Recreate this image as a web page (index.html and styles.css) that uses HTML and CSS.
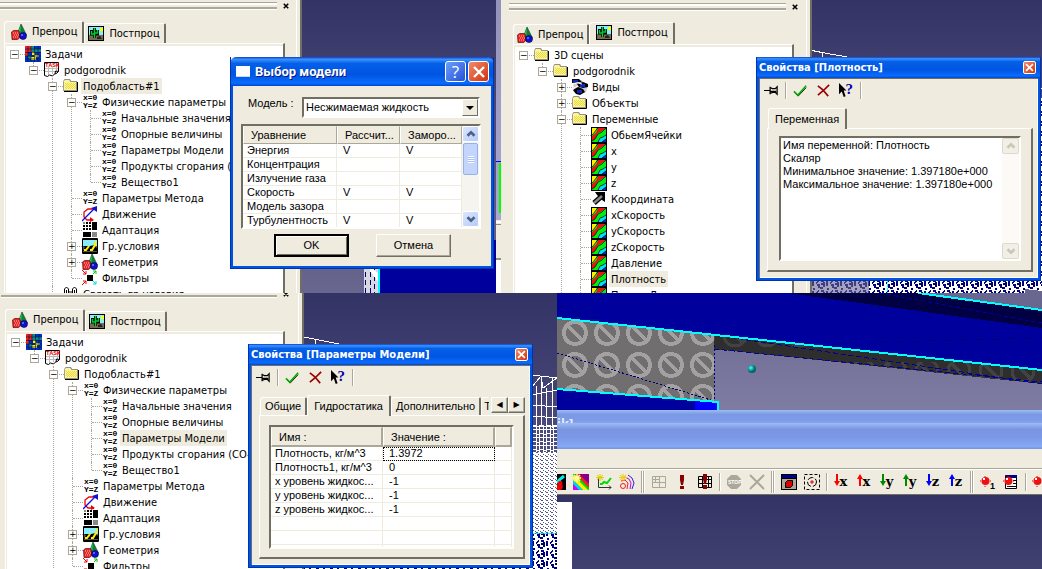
FILE: index.html
```html
<!DOCTYPE html>
<html lang="ru">
<head>
<meta charset="utf-8">
<title>Параметры модели</title>
<link rel="stylesheet" href="styles.css">
</head>
<body>
<svg class="sprite" aria-hidden="true">
  <symbol id="i-shapes" viewBox="0 0 16 16"><path fill="#108030" stroke="#042" stroke-width=".6" d="M10 0L15.500 11H6z"/><path fill="#3c6" d="M10 1l-3 8 2 1z"/><path fill="#e22" stroke="#300" stroke-width=".6" d="M.5 8l2-1.500h5l1 1.500v6l-2 1.500H1z"/><path stroke="#fff" stroke-width=".7" stroke-dasharray="1 1" d="M2 9h5M3 11h5M2 13h5"/><circle cx="12" cy="12" r="3.500" fill="#11c" stroke="#004" stroke-width=".6"/><circle cx="11" cy="11" r="1" fill="#77f"/></symbol>
  <symbol id="i-photo" viewBox="0 0 16 16"><path d="M0 0h16v15H0z"/><path fill="#8ef" d="M1 1h14v8H1z"/><path fill="#776c50" d="M1 9h14v5H1z"/><path fill="#ff0" d="M12 2h3v3h-3z"/><path stroke="#000" stroke-width="3" fill="none" d="M6.500 2v10M3.500 4v4h3M9.500 4v4h-3"/><path stroke="#0c3" stroke-width="1.500" fill="none" d="M6.500 2v10M3.500 5v3h3M9.500 4v3h-3"/><path fill="#222" d="M9 11l3-1 2 3H9z"/></symbol>
  <symbol id="i-grid" viewBox="0 0 16 16"><path fill="#03c" d="M0 0h16v16H0z"/><path fill="#e22" d="M0 0h6v6H0zM0 6h3v4H0z"/><path fill="#188" d="M6 0h3v6H6zM9 3h7v3H9zM3 10h3v3H3z"/><path fill="#fe0" d="M7 6h3v3h4v2h-3v3H6v-3h3V9H7z"/><path stroke="#013" stroke-width=".6" d="M3 0v16M6 0v16M9.500 0v16M13 0v16M0 3h16M0 6.500h16M0 10h16M0 13h16"/></symbol>
  <symbol id="i-task" viewBox="0 0 16 16"><path fill="#fff" stroke="#000" d="M.5.5h14v9l-2 2-2 .5-2 2-3-1-2 1.500-3-1z"/><path stroke="#bbb" d="M1 6.500h13M1 9.500h12M4.500 5v8M8.500 5v7M12.500 5v6"/><text x="1" y="5" font-family="Liberation Mono" font-weight="bold" font-size="6" fill="#e00">TASK</text><path fill="none" stroke="#000" d="M14.500 9.500l-3-.5-.5 3"/></symbol>
  <symbol id="i-folder" viewBox="0 0 16 16"><path fill="#888" d="M1 3l1-2h5l1 2h6v10H1z"/><path fill="#fbf3a0" stroke="#8b8570" stroke-width=".8" d="M.5 3.500l1-2h5l1 2h6v9H.5z"/><path stroke="#e8dc30" stroke-dasharray="1 1" d="M2 5.500h11M3 6.500h10M2 7.500h11M3 8.500h10M2 9.500h11M3 10.500h10"/><path fill="none" stroke="#000" d="M14.500 4v9.500H1"/></symbol>
  <symbol id="i-xy" viewBox="0 0 16 16"><g font-family="Liberation Mono" font-weight="bold" font-size="8"><text x="1" y="6">x=0</text><text x="1" y="14">Y=Z</text></g></symbol>
  <symbol id="i-move" viewBox="0 0 16 16"><path fill="none" stroke="#e00" stroke-width="1.300" d="M12 3H6L2 6v5l3 3h6"/><path fill="#e00" d="M8 11l4 3-4 2z"/><path stroke="#11d" stroke-width="1.300" d="M0 15L13 2"/><path fill="#11d" d="M15 0v6l-6-4z"/></symbol>
  <symbol id="i-adapt" viewBox="0 0 16 16"><path d="M10 0h5v8h-5zM1 10h8v5H1z"/><path fill="#888" d="M10 10h5v5h-5zM1 0h2v2H1z"/><path d="M4 0h2v2H4zM7 0h2v2H7zM1 3h2v2H1zM4 3h2v2H4zM7 3h2v2H7zM1 6h2v2H1zM4 6h2v2H4zM7 6h2v2H7z"/></symbol>
  <symbol id="i-bound" viewBox="0 0 16 16"><rect width="16" height="16" rx="1"/><path fill="#8ef" d="M1 2h14v6H1z"/><path fill="#555" d="M1 8h14v6H1z"/><path d="M1 8l2 1-2 4h7l5-6-5 1-2 3V8zM12 8l3 2v3h-4z"/><path stroke="#fe0" stroke-width="2" fill="none" d="M2 12h2l3-4M8 12h2l3-5 1-4"/></symbol>
  <symbol id="i-filter" viewBox="0 0 16 16"><path d="M5 5h6v6H5z"/><g fill="none"><path stroke="#e00" d="M0 0l4 4V1M4 4H1M0 15l4-4v3M4 11H1"/><path stroke="#0c0" d="M11 4l3-3h-3M14 1v3"/><path stroke="#0dd" d="M11 11l3 3h-3M14 14v-3"/></g></symbol>
  <symbol id="i-link" viewBox="0 0 16 16"><path fill="none" stroke="#000" d="M1.500 9V3l2-2 2 2v6M3.500 9V4M9.500 9V3l2-2 2 2v6M11.500 9V4M5 6h5"/></symbol>
  <symbol id="i-eyes" viewBox="0 0 16 16"><path fill="#ccc" d="M1 1h8l7 5-2 7-6 3-6-3z"/><path d="M0 0h7l3 3H6L0 4zM5 5l6-2 5 2v3l-5 1-4-1zM1 11l5-3 5 2 2 3-5 3-4-1z"/><path fill="#12c" d="M1 1h5v2H1zM8 5h5v3H8zM5 11h5v3H5z"/><path stroke="#fff" d="M1 5l5-1 4 1M2 9l4-2"/></symbol>
  <symbol id="i-field" viewBox="0 0 16 16"><path d="M0 0h16v16H0z"/><path fill="#0e1" d="M1 1h14v14H1z"/><path fill="#fe0" d="M1 1h4v3L1 8z"/><path fill="#e11" d="M7 1h8L11 4 7 6l-3 6-3 2V9l4-3z"/><path fill="#0df" d="M15 8v4l-5 3H7l2-4 3-1z"/><path fill="#12d" d="M15 12v3h-4z"/><path fill="none" stroke="#000" stroke-width=".7" d="M1 8l2-2 2-3 2-2M1 14l3-2 3-5 4-2 4-4M7 15l2-4 3-1 3-2M11 15l4-3"/></symbol>
  <symbol id="i-coord" viewBox="0 0 16 16"><path stroke="#000" stroke-width="5" d="M3 12l8-7"/><path d="M4 1h10v10l-3-2-5-5z"/><path stroke="#888" stroke-width="2.500" d="M3 12l8-7"/></symbol>
  <symbol id="i-pin" viewBox="0 0 16 16"><path fill="none" stroke="#000" stroke-width="1.300" d="M0 8h6M6.500 4v8M7 5l2 1h3l2-2v8l-2-2H9l-2 1M7 9h6"/></symbol>
  <symbol id="i-ok" viewBox="0 0 16 16"><path fill="none" stroke="#111" stroke-width="1" d="M2 10.500l3.500 3.500L14 5"/><path fill="none" stroke="#0a0" stroke-width="1.700" d="M1 9l4 4L14 3"/></symbol>
  <symbol id="i-no" viewBox="0 0 16 16"><path fill="none" stroke="#900" stroke-width="1.800" d="M2 3l5 4 6 7M14 2L8 8l-6 5"/></symbol>
  <symbol id="i-help" viewBox="0 0 16 16"><path d="M0 0l8 8H5l2 6-2 1-2-6-3 3z"/><text x="7" y="12" font-family="Liberation Serif" font-weight="bold" font-size="16" fill="#00a">?</text></symbol>
  <symbol id="i-cross" viewBox="0 0 16 16"><path stroke="#fff" stroke-width="2.400" d="M3 3l10 10M13 3L3 13"/></symbol>
  <symbol id="i-up" viewBox="0 0 16 16"><path fill="none" stroke="currentColor" stroke-width="3" d="M4 10l4-4 4 4"/></symbol>
  <symbol id="i-down" viewBox="0 0 16 16"><path fill="none" stroke="currentColor" stroke-width="3" d="M4 6l4 4 4-4"/></symbol>
  <symbol id="i-x" viewBox="0 0 16 16"><path stroke="#000" stroke-width="2" d="M5 5l6 6M11 5l-6 6"/></symbol>
  <symbol id="t-probe" viewBox="0 0 16 16"><path d="M0 0h16v16H0z"/><path stroke="#0ee" stroke-width="3" d="M2 12L14 2"/><path fill="#e00" d="M9 7h6v4l-4 5H4z"/><path d="M12 7h4v9h-3z"/></symbol>
  <symbol id="t-rainbow" viewBox="0 0 16 16"><path fill="#0d0" d="M0 0h16v16H0z"/><path fill="#808" d="M5 0h11v11z"/><path fill="#e22" d="M2 0h4l10 10v4z"/><path fill="#fe0" d="M0 1l15 15h-5L0 6z"/><path fill="#0cf" d="M0 6l10 10H6L0 10z"/><path fill="#c0f" d="M0 10l6 6H0z"/><path stroke="#ff9" stroke-width="1.500" d="M4 0v8M0 4h8M1 1l6 6M7 1L1 7"/></symbol>
  <symbol id="t-plot" viewBox="0 0 16 16"><path fill="none" stroke="#333" d="M2.500 4v9.500H15l-2-2M15 13.500l-2 2"/><path fill="none" stroke="#0d0" stroke-width="2" d="M4 10h2l2-2 3 1 4-5"/><path stroke="#dc0" d="M4 0v7M0 3.500h8M1 1l6 5M7 1L1 6"/></symbol>
  <symbol id="t-contour" viewBox="0 0 16 16"><g fill="none"><path stroke="#22e" d="M9 1l4 3 2 5-2 6"/><path stroke="#c0c" d="M6 3l4 2 2 4-1 6"/><path stroke="#e22" d="M2 7l4-1 3 3-1 6"/><circle cx="4" cy="12" r="2.500" stroke="#e22"/></g><path stroke="#ec0" d="M4 0v7M0 3.500h8M1 1l6 5M7 1L1 6"/></symbol>
  <symbol id="t-mesh" viewBox="0 0 16 16"><path fill="none" stroke="#aca899" d="M1.500 2.500h13v11h-13zM1 5.500h8M1 8.500h14M4.500 2v7M8.500 2v12"/></symbol>
  <symbol id="t-bang" viewBox="0 0 16 16"><path fill="#800" d="M6 1h4v5L9 11H7L6 6zM6 12h4v3H6z"/></symbol>
  <symbol id="t-meshbang" viewBox="0 0 16 16"><path fill="none" stroke="#000" d="M1.500 2.500h13v11h-13zM1 5.500h14M1 9.500h14M5.500 2v12M11.500 2v12"/><path fill="#800" d="M6 0h4v5L9 10H7L6 5zM6 11h4v4H6z"/></symbol>
  <symbol id="t-stop" viewBox="0 0 16 16"><path fill="#aca899" d="M5 1h6l4 4v6l-4 4H5l-4-4V5z"/><text x="2" y="10" font-family="Liberation Sans" font-weight="bold" font-size="5" fill="#fff">STOP</text></symbol>
  <symbol id="t-del" viewBox="0 0 16 16"><path stroke="#aca899" stroke-width="2" d="M1 1l14 14M15 1L1 15"/></symbol>
  <symbol id="t-box" viewBox="0 0 16 16"><path d="M0 0h16v16H0z"/><path fill="#008" d="M1 1h14v3H1z"/><path fill="#aca899" d="M1 5h14v10H1z"/><path fill="#d00" stroke="#000" d="M4.500 8.500l2-2h5v5l-2 2h-5z"/></symbol>
  <symbol id="t-fit" viewBox="0 0 16 16"><path fill="none" stroke="#000" stroke-dasharray="3 2" d="M.5.5h15v15H.5z"/><circle cx="8" cy="8" r="4.500" fill="none" stroke="#000" stroke-dasharray="6 2"/><path stroke="#d00" d="M6 8h4M8 6v4"/></symbol>
  <symbol id="t-dn" viewBox="0 0 6 16"><path fill="none" stroke="currentColor" stroke-width="2" d="M3 0v10"/><path fill="currentColor" d="M0 7h6l-3 5z"/></symbol>
  <symbol id="t-upa" viewBox="0 0 6 16"><path fill="none" stroke="currentColor" stroke-width="2" d="M3 2v10"/><path fill="currentColor" d="M0 5h6L3 0z"/></symbol>
  <symbol id="t-ball" viewBox="0 0 16 16"><path stroke="#e00" stroke-dasharray="1 1" d="M0 7h11M5 2v11"/><circle cx="5.500" cy="7" r="4" fill="#e11"/><path fill="#fff" d="M3 4h2v2H3z"/></symbol>
  <symbol id="t-ball1" viewBox="0 0 16 16"><use href="#t-ball"/><text x="10" y="15" font-family="Liberation Sans" font-weight="bold" font-size="9">1</text></symbol>
  <symbol id="t-balllist" viewBox="0 0 16 16"><path fill="#fff" stroke="#000" d="M2.500 1.500h11v13h-11z"/><path fill="#008" d="M3 1h11v3H3z"/><path stroke="#000" d="M10 6.500h3M10 9.500h3M4 12.500h9"/><use href="#t-ball"/></symbol>
</svg>

<main class="desk">
  <div class="row row-top">
    <section class="shot">
      <aside class="dock">
        <div class="grip"><i></i><button class="x" aria-label="Закрыть"><svg><use href="#i-x"/></svg></button></div>
        <nav class="tabs"><button class="tab on"><svg><use href="#i-shapes"/></svg>Препроц</button><button class="tab"><svg><use href="#i-photo"/></svg>Постпроц</button></nav>
        <div class="page"><ul class="tree">
          <li><div class="node"><button class="box">−</button><svg><use href="#i-grid"/></svg><span>Задачи</span></div>
          <ul><li><div class="node"><button class="box">−</button><svg><use href="#i-task"/></svg><span>podgorodnik</span></div>
            <ul><li><div class="node"><button class="box">−</button><svg><use href="#i-folder"/></svg><span class="sel">Подобласть#1</span></div>
              <ul>
                <li><div class="node"><button class="box">−</button><svg><use href="#i-xy"/></svg><span>Физические параметры</span></div>
                  <ul>
                    <li><div class="node"><svg><use href="#i-xy"/></svg><span>Начальные значения</span></div></li>
                    <li><div class="node"><svg><use href="#i-xy"/></svg><span>Опорные величины</span></div></li>
                    <li><div class="node"><svg><use href="#i-xy"/></svg><span>Параметры Модели</span></div></li>
                    <li><div class="node"><svg><use href="#i-xy"/></svg><span>Продукты сгорания (CO-</span></div></li>
                    <li><div class="node"><svg><use href="#i-xy"/></svg><span>Вещество1</span></div></li>
                  </ul></li>
                <li><div class="node"><svg><use href="#i-xy"/></svg><span>Параметры Метода</span></div></li>
                <li><div class="node"><svg><use href="#i-move"/></svg><span>Движение</span></div></li>
                <li><div class="node"><svg><use href="#i-adapt"/></svg><span>Адаптация</span></div></li>
                <li><div class="node"><button class="box">+</button><svg><use href="#i-bound"/></svg><span>Гр.условия</span></div></li>
                <li><div class="node"><button class="box">+</button><svg><use href="#i-shapes"/></svg><span>Геометрия</span></div></li>
                <li><div class="node"><svg><use href="#i-filter"/></svg><span>Фильтры</span></div></li>
              </ul></li>
              <li><div class="node"><svg><use href="#i-link"/></svg><span>Связать гр.условия</span></div></li>
            </ul></li></ul></li>
        </ul></div>
      </aside>
      <svg class="scene" viewBox="302 0 199 293" preserveAspectRatio="xMinYMin slice" shape-rendering="crispEdges">
        <defs><linearGradient id="sky" x2="0" y2="1"><stop stop-color="#333366"/><stop offset="1" stop-color="#69678f"/></linearGradient>
        <linearGradient id="edge" x2="0" y2="1"><stop stop-color="#9392bb"/><stop offset="1" stop-color="#aba9cf"/></linearGradient></defs>
        <path fill="url(#sky)" d="M302 0h195v293H302z"/>
        <path fill="url(#edge)" d="M496 0h5v222h-5z"/>
        <path fill="#00009c" d="M380 240h117v53H380z"/><path fill="#d8d8e0" d="M364 264h16v29h-16z"/>
        <path stroke="#00007a" stroke-dasharray="5 3" d="M365 264v29M370 264v29M374 268v25"/><path fill="#fff" d="M371 266l8 9v8l-9-12z"/>
        <path stroke="#0ff" stroke-width="2" d="M379 264v29"/>
        <path stroke="#00f" d="M496 161.500h5"/><path stroke="#0f0" stroke-width="2" d="M500 163v50"/>
        <path fill="#efebde" d="M496 220h5v38h-5z"/><path fill="#fff" d="M496 221h5v2h-5zM496 260h5v33h-5z"/><path fill="#928f82" d="M496 224h5v1h-5zM496 258h5v2h-5z"/>
      </svg>
      <section class="win win-model">
        <header class="bar"><i class="doc"></i><h2>Выбор модели</h2><button class="cap" aria-label="Справка">?</button><button class="cap red" aria-label="Закрыть"><svg><use href="#i-cross"/></svg></button></header>
        <div class="body">
          <div class="field"><label for="model">Модель :</label><div class="pick"><select id="model"><option>Несжимаемая жидкость</option></select><i></i></div></div>
          <div class="list"><table>
            <thead><tr><th>Уравнение</th><th>Рассчит...</th><th>Заморо...</th></tr></thead>
            <tbody><tr><td>Энергия</td><td>V</td><td>V</td></tr><tr><td>Концентрация</td><td></td><td></td></tr><tr><td>Излучение газа</td><td></td><td></td></tr><tr><td>Скорость</td><td>V</td><td>V</td></tr><tr><td>Модель зазора</td><td></td><td></td></tr><tr><td>Турбулентность</td><td>V</td><td>V</td></tr></tbody>
          </table>
          <div class="scroll"><button aria-label="Вверх"><svg><use href="#i-up"/></svg></button><i class="thumb"></i><button aria-label="Вниз"><svg><use href="#i-down"/></svg></button></div></div>
          <div class="actions"><button class="push main">OK</button><button class="push">Отмена</button></div>
        </div>
      </section>
    </section>

    <section class="shot">
      <aside class="dock dock-post">
        <div class="grip"><i></i><button class="x" aria-label="Закрыть"><svg><use href="#i-x"/></svg></button></div>
        <nav class="tabs"><button class="tab"><svg><use href="#i-shapes"/></svg>Препроц</button><button class="tab on"><svg><use href="#i-photo"/></svg>Постпроц</button></nav>
        <div class="page"><ul class="tree">
          <li><div class="node"><button class="box">−</button><svg><use href="#i-folder"/></svg><span>3D сцены</span></div>
          <ul><li><div class="node"><button class="box">−</button><svg><use href="#i-folder"/></svg><span>podgorodnik</span></div>
            <ul>
              <li><div class="node"><button class="box">+</button><svg><use href="#i-eyes"/></svg><span>Виды</span></div></li>
              <li><div class="node"><button class="box">+</button><svg><use href="#i-folder"/></svg><span>Объекты</span></div></li>
              <li><div class="node"><button class="box">−</button><svg><use href="#i-folder"/></svg><span>Переменные</span></div>
                <ul>
                  <li><div class="node"><svg><use href="#i-field"/></svg><span>ОбьемЯчейки</span></div></li>
                  <li><div class="node"><svg><use href="#i-field"/></svg><span>x</span></div></li>
                  <li><div class="node"><svg><use href="#i-field"/></svg><span>y</span></div></li>
                  <li><div class="node"><svg><use href="#i-field"/></svg><span>z</span></div></li>
                  <li><div class="node"><svg><use href="#i-coord"/></svg><span>Координата</span></div></li>
                  <li><div class="node"><svg><use href="#i-field"/></svg><span>xСкорость</span></div></li>
                  <li><div class="node"><svg><use href="#i-field"/></svg><span>yСкорость</span></div></li>
                  <li><div class="node"><svg><use href="#i-field"/></svg><span>zСкорость</span></div></li>
                  <li><div class="node"><svg><use href="#i-field"/></svg><span>Давление</span></div></li>
                  <li><div class="node"><svg><use href="#i-field"/></svg><span class="sel">Плотность</span></div></li>
                  <li><div class="node"><svg><use href="#i-field"/></svg><span>ПолноеДавл</span></div></li>
                </ul></li>
              <li><div class="node"></div></li>
            </ul></li></ul></li>
        </ul></div>
      </aside>
      <svg class="scene" viewBox="812 0 230 293" preserveAspectRatio="xMinYMin slice" shape-rendering="crispEdges">
        <defs><pattern id="mesh" width="14" height="10" patternUnits="userSpaceOnUse"><path fill="#fff" d="M0 0h14v10H0z"/><path stroke="#00007a" stroke-width="1.500" d="M1 1v5M4 3l3-2M5 5h2v3M9 1h3M9 4l3-1v4M1 9h2M8 8h3"/></pattern></defs>
        <path fill="url(#sky)" d="M811 0h231v293H811z"/>
        <path stroke="#fff" fill="none" d="M812 50.500l10 2 28 5M822.500 52v6M1040 88l2 1"/>
        <path fill="url(#mesh)" d="M1040 98h2v195H811v-13h229z"/>
        <path fill="#69678f" opacity=".6" d="M811 280h58v13h-58z"/><path stroke="#0ff" stroke-dasharray="3 1" d="M887.500 280v13"/><path fill="#69678f" d="M1025 289l17 2v2h-17z"/>
      </svg>
      <section class="win win-props win-var">
        <header class="bar"><h2>Свойства [Плотность]</h2><button class="cap red" aria-label="Закрыть"><svg><use href="#i-cross"/></svg></button></header>
        <div class="body">
          <div class="tools"><button aria-label="Закрепить"><svg><use href="#i-pin"/></svg></button><i></i><button aria-label="Применить"><svg><use href="#i-ok"/></svg></button><button aria-label="Отменить"><svg><use href="#i-no"/></svg></button><button aria-label="Справка"><svg><use href="#i-help"/></svg></button><i></i></div>
          <nav class="subtabs"><button class="on">Переменная</button></nav>
          <div class="sheet"><div class="memo"><textarea readonly aria-label="Переменная">Имя переменной: Плотность
Скаляр
Минимальное значение: 1.397180e+000
Максимальное значение: 1.397180e+000</textarea>
          <div class="scroll off"><button aria-label="Вверх"><svg><use href="#i-up"/></svg></button><button aria-label="Вниз"><svg><use href="#i-down"/></svg></button></div></div></div>
        </div>
      </section>
    </section>
  </div>

  <div class="row row-bottom">
    <section class="shot">
      <aside class="dock dock-cut">
        <div class="grip"><i></i><button class="x" aria-label="Закрыть"><svg><use href="#i-x"/></svg></button></div>
        <nav class="tabs"><button class="tab on"><svg><use href="#i-shapes"/></svg>Препроц</button><button class="tab"><svg><use href="#i-photo"/></svg>Постпроц</button></nav>
        <div class="page"><ul class="tree">
          <li><div class="node"><button class="box">−</button><svg><use href="#i-grid"/></svg><span>Задачи</span></div>
          <ul><li><div class="node"><button class="box">−</button><svg><use href="#i-task"/></svg><span>podgorodnik</span></div>
            <ul><li><div class="node"><button class="box">−</button><svg><use href="#i-folder"/></svg><span>Подобласть#1</span></div>
              <ul>
                <li><div class="node"><button class="box">−</button><svg><use href="#i-xy"/></svg><span>Физические параметры</span></div>
                  <ul>
                    <li><div class="node"><svg><use href="#i-xy"/></svg><span>Начальные значения</span></div></li>
                    <li><div class="node"><svg><use href="#i-xy"/></svg><span>Опорные величины</span></div></li>
                    <li><div class="node"><svg><use href="#i-xy"/></svg><span class="sel">Параметры Модели</span></div></li>
                    <li><div class="node"><svg><use href="#i-xy"/></svg><span>Продукты сгорания (CO-</span></div></li>
                    <li><div class="node"><svg><use href="#i-xy"/></svg><span>Вещество1</span></div></li>
                  </ul></li>
                <li><div class="node"><svg><use href="#i-xy"/></svg><span>Параметры Метода</span></div></li>
                <li><div class="node"><svg><use href="#i-move"/></svg><span>Движение</span></div></li>
                <li><div class="node"><svg><use href="#i-adapt"/></svg><span>Адаптация</span></div></li>
                <li><div class="node"><button class="box">+</button><svg><use href="#i-bound"/></svg><span>Гр.условия</span></div></li>
                <li><div class="node"><button class="box">+</button><svg><use href="#i-shapes"/></svg><span>Геометрия</span></div></li>
                <li><div class="node"><svg><use href="#i-filter"/></svg><span>Фильтры</span></div></li>
              </ul></li>
              <li><div class="node"></div></li>
            </ul></li></ul></li>
        </ul></div>
      </aside>
      <svg class="scene" viewBox="304 293 253 276" preserveAspectRatio="xMinYMin slice" shape-rendering="crispEdges">
        <defs><linearGradient id="dusk" x2="0" y2="1"><stop stop-color="#333366"/><stop offset="1" stop-color="#62608c"/></linearGradient>
        <pattern id="cells" width="7" height="8" patternUnits="userSpaceOnUse"><path stroke="#fff" fill="none" d="M.5 0v8M4.500 0v8M0 1.500l7 1M0 5.500h7"/></pattern>
        <pattern id="fine" width="5" height="4" patternUnits="userSpaceOnUse"><path fill="#fff" d="M0 0h5v4H0z"/><path stroke="#55538a" d="M1 .5h2M3 2.500h1M0 3.500h1"/></pattern></defs>
        <path fill="url(#dusk)" d="M304 293h253v276H304z"/>
        <path stroke="#fff" fill="none" d="M304 337l10 2 30 6M315.500 339v8M532 375l25 3M532 387l9-11 2 12 14-10M532 395l25-5M532 405l25 2M532 416l25 2M541.500 376v50M546.500 388v40M552.500 378v50M536.500 386v40M532 426h25"/>
        <path fill="url(#cells)" d="M532 425h25v30h-25z"/><path fill="url(#fine)" d="M532 452h25v81h-25z"/>
        <path fill="url(#mesh)" d="M532 534h25v35H304v-4h228z"/><path stroke="#0ff" stroke-dasharray="3 1" d="M532 533.500h23"/>
      </svg>
      <section class="win win-props win-hydro">
        <header class="bar"><h2>Свойства [Параметры Модели]</h2><button class="cap red" aria-label="Закрыть"><svg><use href="#i-cross"/></svg></button></header>
        <div class="body">
          <div class="tools"><button aria-label="Закрепить"><svg><use href="#i-pin"/></svg></button><i></i><button aria-label="Применить"><svg><use href="#i-ok"/></svg></button><button aria-label="Отменить"><svg><use href="#i-no"/></svg></button><button aria-label="Справка"><svg><use href="#i-help"/></svg></button><i></i></div>
          <nav class="subtabs"><button>Общие</button><button class="on">Гидростатика</button><button>Дополнительно</button><button class="cutoff">Т</button><div class="spin"><button aria-label="Назад">◀</button><button aria-label="Вперёд">▶</button></div></nav>
          <div class="sheet"><div class="list params"><table>
            <thead><tr><th>Имя :</th><th>Значение :</th><th></th></tr></thead>
            <tbody><tr><td>Плотность, кг/м^3</td><td class="focus">1.3972</td><td></td></tr><tr><td>Плотность1, кг/м^3</td><td>0</td><td></td></tr><tr><td>x уровень жидкос...</td><td>-1</td><td></td></tr><tr><td>y уровень жидкос...</td><td>-1</td><td></td></tr><tr><td>z уровень жидкос...</td><td>-1</td><td></td></tr><tr><td></td><td></td><td></td></tr><tr><td></td><td></td><td></td></tr><tr><td></td><td></td><td></td></tr></tbody>
          </table></div></div>
        </div>
      </section>
    </section>

    <section class="app">
      <svg class="view" viewBox="557 293 485 117" preserveAspectRatio="none" shape-rendering="crispEdges">
        <defs><linearGradient id="haze" x2="0" y2="1"><stop stop-color="#6a6890"/><stop offset="1" stop-color="#7f7ca3"/></linearGradient>
        <radialGradient id="ball" cx=".35" cy=".35"><stop stop-color="#4ff"/><stop offset="1" stop-color="#066"/></radialGradient>
        <pattern id="stops" x="559" y="317" width="32" height="32" patternUnits="userSpaceOnUse"><g fill="none" stroke="#a3a1a1" stroke-width="4"><circle cx="16" cy="16" r="11"/><path d="M9 9l14 14"/></g></pattern>
        <pattern id="darkstops" x="719" y="326" width="32" height="36" patternUnits="userSpaceOnUse"><g fill="none" stroke="#424242" stroke-width="3"><circle cx="16" cy="9" r="11"/><path d="M9 2l14 14"/></g></pattern></defs>
        <path fill="url(#haze)" d="M557 293h485v117H557z"/>
        <path fill="#00009c" d="M557 293h370l115 19v60L557 318z"/>
        <path fill="#000042" d="M787 293h134l121 18v17z"/><path stroke="#0000a8" stroke-dasharray="4 3" d="M880 293l162 30"/>
        <path stroke="#00007a" stroke-dasharray="10 6" d="M557 305l45 15M880 342l162-4"/>
        <path fill="#69678f" d="M921 293h121v18z"/><path stroke="#0ff" stroke-width="2" d="M918 293l124 17"/>
        <path fill="#706e6e" d="M557 318l157 16v67l-157-11z"/><path fill="url(#stops)" d="M557 318l157 16v67l-157-11z"/>
        <path fill="#2e2e2e" d="M714 334l328 37v13L714 349z"/><path fill="url(#darkstops)" d="M714 334l328 37v13L714 349z"/>
        <path stroke="#00009c" stroke-dasharray="5 3" d="M714 349l328 33M714 335l328 49"/>
        <path stroke="#00007a" stroke-dasharray="2 2" d="M557 353l157 48M714.500 345v58"/>
        <path fill="#00009c" d="M557 390l161 13v7H557z"/><path fill="#00f" d="M695 401h22v9h-22z"/>
        <path fill="none" stroke="#0ff" stroke-width="2" d="M557 318l485 52M557 389l161 13v8"/>
        <circle cx="752" cy="369" r="4" fill="url(#ball)" shape-rendering="auto"/>
      </svg>
      <div class="caption"><b>ik]</b></div><div class="caption caption-2"></div>
      <div class="menu"></div>
      <div class="toolbar">
        <button><svg><use href="#t-probe"/></svg></button><button><svg><use href="#t-rainbow"/></svg></button><button><svg><use href="#t-plot"/></svg></button><button><svg><use href="#t-contour"/></svg></button><i class="handle"></i>
        <button><svg><use href="#t-mesh"/></svg></button><button><svg><use href="#t-bang"/></svg></button><button><svg><use href="#t-meshbang"/></svg></button><i></i>
        <button><svg><use href="#t-stop"/></svg></button><button><svg><use href="#t-del"/></svg></button><i class="handle"></i>
        <button><svg><use href="#t-box"/></svg></button><button><svg><use href="#t-fit"/></svg></button><i></i>
        <button class="axis r"><svg><use href="#t-dn"/></svg><b>x</b></button><button class="axis r"><svg><use href="#t-upa"/></svg><b>x</b></button><button class="axis g"><svg><use href="#t-dn"/></svg><b>y</b></button><button class="axis g"><svg><use href="#t-upa"/></svg><b>y</b></button><button class="axis b"><svg><use href="#t-dn"/></svg><b>z</b></button><button class="axis b"><svg><use href="#t-upa"/></svg><b>z</b></button><i class="handle"></i>
        <button><svg><use href="#t-ball1"/></svg></button><button><svg><use href="#t-balllist"/></svg></button><i></i><button><svg><use href="#t-ball"/></svg></button>
      </div>
      <div class="void"><i></i></div>
    </section>
  </div>
</main>
</body>
</html>
```
FILE: styles.css
```css
* { box-sizing: border-box; }
:root {
  --face: #efebde;
  --shade: #aca899;
  --dark: #716f64;
  --ui: "DejaVu Sans Condensed", "Noto Sans", sans-serif;
  --sys: "Liberation Sans", Arial, sans-serif;
}
body { margin: 0; font: 11px/13px var(--ui); color: #000; }
button { margin: 0; padding: 0; border: 0; background: none; font: inherit; color: inherit; }
h2, ul { margin: 0; padding: 0; }
ul { list-style: none; }
svg { width: 16px; height: 16px; flex: none; display: block; }
.sprite { position: absolute; width: 0; height: 0; }

.desk { display: grid; grid-template-rows: 293fr 276fr; height: 100vh; overflow: hidden; }
.row { display: grid; min-height: 0; }
.row-top { grid-template-columns: 501fr 541fr; }
.row-bottom { grid-template-columns: 557fr 485fr; }
.shot { position: relative; display: flex; min-width: 0; min-height: 0; overflow: hidden; background: #333366; }
.scene { flex: 1; width: auto; min-width: 0; height: 100%; }

/* docked tree panel */
.dock { display: flex; flex-direction: column; flex: none; width: 302px; padding: 0 15px 0 4px; background: var(--face); border-right: 2px solid var(--dark); box-shadow: inset -3px 0 var(--face), inset -4px 0 #fff; }
.dock-post { width: 311px; padding-right: 16px; padding-left: 12px; padding-top: 1px; }
.dock-cut { width: 304px; margin-top: -5px; padding-left: 5px; padding-right: 17px; }
.grip { display: flex; align-items: center; height: 12px; margin: 0 -10px 9px -4px; }
.grip i { flex: 1; height: 6px; border-top: 2px solid #fff; border-bottom: 2px solid var(--shade); box-shadow: 0 -1px var(--shade), 0 1px #fff; background: var(--face); }
.grip .x svg { width: 18px; height: 12px; }
.tabs { display: flex; align-items: flex-end; height: 22px; }
.tab { display: flex; align-items: center; gap: 5px; height: 20px; padding: 0 4px 0 3px; background: var(--face); border: 1px solid #fff; border-right: 2px solid var(--dark); border-bottom: 0; border-radius: 3px 2px 0 0; }
.tab.on { height: 22px; padding: 0 5px 2px 6px; }
.page { flex: 1; min-height: 0; overflow: hidden; padding: 2px 0 0 1px; border-top: 1px solid #fff; border-left: 1px solid #fff; border-right: 2px solid var(--dark); background: #fff; box-shadow: inset 1px 2px var(--face); }
.tree { white-space: nowrap; }
.tree ul { margin-left: 19px; }
.tree li { position: relative; }
.tree li::before { content: ""; position: absolute; left: 8px; top: 0; bottom: 0; border-left: 1px dotted var(--shade); }
.tree li:last-child::before { bottom: auto; height: 8px; }
.tree > li::before { display: none; }
.node { position: relative; display: flex; align-items: center; height: 16px; padding-left: 19px; }
.node::before { content: ""; position: absolute; left: 9px; top: 8px; width: 10px; border-top: 1px dotted var(--shade); }
.node span { margin-left: 2px; padding: 1px 2px 0; line-height: 15px; }
.node .sel { background: var(--face); }
.box { position: absolute; left: 4px; top: 4px; width: 9px; height: 9px; border: 1px solid var(--shade); background: #fff; font: 9px/7px "DejaVu Sans", sans-serif; display: grid; place-items: center; }

/* windows */
.win { position: absolute; display: flex; flex-direction: column; border: 3px solid #0054e3; border-top: 0; background: var(--face); box-shadow: inset 0 0 0 1px #fff; font-family: var(--sys); }
.win::after { content: ""; position: absolute; inset: 0 -3px -3px; border: 1px solid #0033b0; border-top: 0; pointer-events: none; }
.bar { display: flex; align-items: center; margin: 0 -3px; color: #fff; background: linear-gradient(#0a3fc8, #3a93ff 8%, #0560e8 22%, #0055e0 60%, #0a6cff 90%, #0047cc); }
.bar h2 { flex: 1; font: bold 11px/16px var(--ui); white-space: nowrap; }
.cap { display: grid; place-items: center; border: 1px solid #fff; border-radius: 3px; background: linear-gradient(135deg, #6f9dfa, #2153d8); color: #fff; }
.cap.red { background: linear-gradient(135deg, #f08a6c, #d0330c); }
.body { flex: 1; display: flex; flex-direction: column; min-height: 0; }

.win-model { left: 230px; top: 57px; width: 264px; height: 212px; border-radius: 7px 7px 0 0; box-shadow: none; }
.win-model .bar { height: 29px; padding: 0 5px 0 6px; gap: 2px; border-radius: 7px 7px 0 0; }
.win-model h2 { margin-left: 3px; font: bold 13px/18px Roboto, sans-serif; text-shadow: 1px 1px #0a1883; }
.win-model .cap { width: 21px; height: 21px; font: 17px/19px "Open Sans", sans-serif; }
.doc { width: 14px; height: 11px; background: #fff; border-bottom: 1px solid #c8d8ff; }
.win-model .body { padding: 11px 10px 9px 8px; }
.field { display: flex; align-items: flex-start; justify-content: space-between; margin: 0 1px 6px 7px; }
.pick { position: relative; width: 178px; height: 21px; border: 2px solid; border-color: var(--dark) #fff #fff var(--dark); background: #fff; }
.pick select { appearance: none; width: 100%; height: 17px; padding: 0 2px; border: 0; background: none; font: 11px/17px var(--sys); color: #000; }
.pick i { position: absolute; right: 0; top: 0; width: 16px; height: 17px; background: var(--face); border: 1px solid; border-color: #fff var(--dark) var(--dark) #fff; pointer-events: none; }
.pick i::after { content: ""; position: absolute; left: 3px; top: 6px; border: 4px solid transparent; border-top-color: #000; border-bottom: 0; }

.list { display: flex; height: 106px; border: 2px solid; border-color: var(--dark) #fff #fff var(--dark); background: #fff; overflow: hidden; }
.list table { flex: 1; border-collapse: separate; border-spacing: 0; table-layout: fixed; align-self: flex-start; }
.list th { height: 18px; padding: 0 0 0 7px; background: var(--face); border: 1px solid; border-color: var(--face) var(--shade) var(--shade) #fff; font-weight: normal; text-align: left; white-space: nowrap; line-height: 14px; }
.list td { height: 14px; padding: 0 0 0 4px; border-right: 1px solid var(--face); border-bottom: 1px solid var(--face); line-height: 13px; white-space: nowrap; }
.win-model th:first-child { width: 94px; }
.win-model td + td { padding-left: 6px; }
.scroll { display: flex; flex-direction: column; width: 17px; background: #f6f4ee; color: #4d6185; }
.scroll button { height: 16px; border: 1px solid #fff; border-radius: 2px; background: linear-gradient(135deg, #dbe6ff, #b5cbf8); display: grid; place-items: center; }
.scroll button svg { width: 14px; height: 14px; }
.scroll button:last-child { margin-top: auto; }
.thumb { height: 32px; margin: 1px; border: 1px solid #98b0e8; border-radius: 2px; background: repeating-linear-gradient(#fff 0 1px, #a8c0f5 1px 2px) center / 6px 7px no-repeat, #c4d5fc; }
.scroll.off { color: #c9c7ba; background: #fbfaf6; }
.scroll.off button { background: #f2efe6; border-color: #dedacb; }
.actions { display: flex; gap: 27px; margin: 5px 0 0 33px; }
.push { width: 75px; height: 23px; border: 1px solid; border-color: #fff var(--dark) var(--dark) #fff; box-shadow: inset -1px -1px var(--shade); }
.push.main { border: 2px solid #000; box-shadow: inset 1px 1px #fff, inset -1px -1px var(--dark); }

.win-props { width: 285px; height: 224px; }
.win-var { left: 255px; top: 57px; }
.win-hydro { left: 248px; top: 51px; }
.win-props .bar { height: 21px; padding: 0 5px 0 3px; }
.win-props .cap { width: 13px; height: 13px; border-radius: 2px; }
.win-props .cap svg { width: 11px; height: 11px; }
.win-props .body { padding: 2px 5px 6px 7px; border-top: 1px solid var(--dark); border-left: 1px solid var(--dark); }
.tools { display: flex; align-items: center; margin-left: -7px; }
.tools button { width: 23px; height: 18px; display: grid; place-items: center; }
.tools button svg { width: 15px; height: 15px; }
.tools i { width: 1px; height: 17px; margin: 0 3px 0 2px; background: var(--shade); box-shadow: 1px 0 #fff; }
.subtabs { position: relative; z-index: 1; display: flex; align-items: flex-end; height: 21px; margin-top: 8px; padding-left: 1px; }
.subtabs > button { height: 18px; padding: 0 4px; border: 1px solid #fff; border-right: 2px solid var(--dark); border-bottom: 0; border-radius: 3px 2px 0 0; background: var(--face); white-space: nowrap; }
.subtabs > .on { height: 21px; margin-bottom: -1px; padding: 0 6px; }
.subtabs > .cutoff { width: 8px; padding: 0 2px; border-right: 0; overflow: hidden; }
.spin { display: flex; margin-left: auto; align-self: center; }
.spin button { width: 17px; height: 16px; border: 1px solid; border-color: #fff var(--dark) var(--dark) #fff; box-shadow: inset -1px -1px var(--shade); font: 8px/12px "DejaVu Sans", sans-serif; }
.sheet { flex: 1; min-height: 0; padding: 7px 10px 9px 11px; border: 1px solid #fff; border-right: 2px solid var(--dark); border-bottom: 2px solid var(--dark); }
.memo { display: flex; height: 100%; border: 2px solid; border-color: var(--dark) #fff #fff var(--dark); background: #fff; }
.memo textarea { flex: 1; min-width: 0; padding: 1px 2px; border: 0; resize: none; overflow: hidden; outline: 0; font: 11px/13px var(--sys); color: #000; }
.params { height: 100%; }
.params th { height: 20px; border-bottom-width: 2px; border-right-width: 2px; }
.params th:nth-child(1), .params th:nth-child(2) { width: 112px; }
.params td + td { padding-left: 6px; }
.params .focus { outline: 1px dotted #000; outline-offset: -1px; }
.win-hydro .sheet { padding: 9px 9px 8px; }

/* main application frame */
.app { display: grid; grid-template-columns: minmax(0, 1fr); grid-template-rows: 117fr 13px 26px 20px auto 74fr; min-width: 0; overflow: hidden; background: var(--face); }
.view { width: 100%; height: 100%; min-height: 0; }
.caption { overflow: hidden; background: linear-gradient(#9dbcf3, #7a98e4 35%, #7d9be8 80%, #83a5ee); color: #e6ecff; }
.caption b { display: block; padding-top: 6px; font: bold 13px/14px "Open Sans", sans-serif; }
.caption-2 { background: linear-gradient(#9dbcf3, #7a94e0 25%, #7c9ae8 60%, #85aaf2 90%, #7393e0); }
.menu { border-bottom: 1px solid var(--shade); }
.toolbar { display: flex; align-items: center; height: 26px; margin-left: -11px; border-top: 1px solid #fff; border-bottom: 1px solid var(--dark); }
.toolbar button { flex: none; width: 23px; height: 23px; display: flex; align-items: center; justify-content: center; }
.toolbar i { flex: none; width: 1px; height: 18px; margin: 0 2px 0 3px; background: var(--shade); box-shadow: 1px 0 #fff; }
.toolbar .handle { width: 3px; height: 22px; margin: 0 3px; background: #fff; border-left: 1px solid var(--shade); border-right: 1px solid var(--shade); }
.toolbar .axis svg { width: 6px; height: 16px; }
.axis b { font: bold 13px/16px "DejaVu Serif", serif; color: #000; }
.axis.r { color: #f00; }
.axis.g { color: #080; }
.axis.b { color: #00f; }
.void { background: linear-gradient(#333366, #414170); padding-top: 7px; }
.void i { display: block; width: 15px; height: 100%; background: #fff; }
```
